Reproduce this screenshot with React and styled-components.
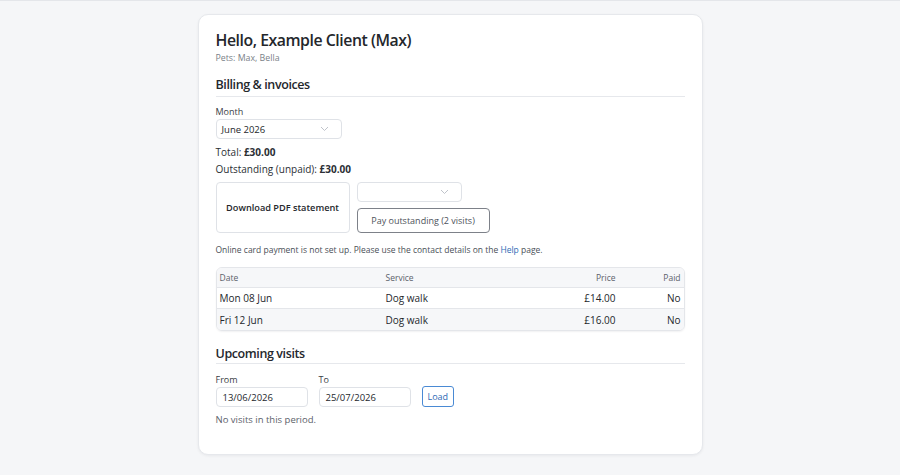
import React from "react";
import styled, { createGlobalStyle } from "styled-components";

const GlobalStyle = createGlobalStyle`
  html, body {
    margin: 0;
    padding: 0;
    background: #f5f6f8;
    font-family: "Open Sans", "Noto Sans", sans-serif;
    color: #1f2328;
  }
  * { box-sizing: border-box; }
`;

const visits = [
  { date: "Mon 08 Jun", service: "Dog walk", price: "£14.00", paid: "No" },
  { date: "Fri 12 Jun", service: "Dog walk", price: "£16.00", paid: "No" },
];

const Chevron = () => (
  <svg width="9" height="6" viewBox="0 0 9 6" fill="none">
    <path d="M1 1l3.5 3.5L8 1" stroke="#b8bcc4" strokeWidth="0.9" />
  </svg>
);

const App = () => {
  return (
    <>
      <GlobalStyle />
      <Page>
        <Card>
          <Title>Hello, Example Client (Max)</Title>
          <Muted>Pets: Max, Bella</Muted>

          <SectionTitle $top={12} $pad={2}>
            Billing &amp; invoices
          </SectionTitle>
          <Field $top={9}>
            <Label>Month</Label>
            <Select $width={126}>
              <span>June 2026</span>
              <Chevron />
            </Select>
          </Field>
          <Line $top={7}>
            Total: <b>£30.00</b>
          </Line>
          <Line $top={5}>
            Outstanding (unpaid): <b>£30.00</b>
          </Line>

          <Actions>
            <BigButton>Download PDF statement</BigButton>
            <PayColumn>
              <Select $width={105}>
                <span />
                <Chevron />
              </Select>
              <OutlineButton>Pay outstanding (2 visits)</OutlineButton>
            </PayColumn>
          </Actions>

          <Note>
            Online card payment is not set up. Please use the contact details on
            the <Link>Help</Link> page.
          </Note>

          <Table>
            <HeadRow>
              <Cell>Date</Cell>
              <Cell>Service</Cell>
              <Cell $right>Price</Cell>
              <Cell $right>Paid</Cell>
            </HeadRow>
            {visits.map((v, i) => (
              <Row key={v.date} $striped={i % 2 === 1}>
                <Cell>{v.date}</Cell>
                <Cell>{v.service}</Cell>
                <Cell $right>{v.price}</Cell>
                <Cell $right>{v.paid}</Cell>
              </Row>
            ))}
          </Table>

          <SectionTitle $top={14} $pad={0}>
            Upcoming visits
          </SectionTitle>
          <RangeRow>
            <Field $top={10}>
              <Label>From</Label>
              <Input>13/06/2026</Input>
            </Field>
            <Field $top={10}>
              <Label>To</Label>
              <Input>25/07/2026</Input>
            </Field>
            <LoadButton>Load</LoadButton>
          </RangeRow>
          <Empty>No visits in this period.</Empty>
        </Card>
      </Page>
    </>
  );
};

export default App;

const Page = styled.div`
  min-height: 475px;
  border-top: 1px solid #e4e6ea;
  padding-top: 13px;
  display: flex;
  justify-content: center;
  align-items: flex-start;
`;

const Card = styled.div`
  width: 505px;
  background: #fff;
  border: 1px solid #e6e8ec;
  border-radius: 10px;
  box-shadow: 0 1px 3px rgba(20, 24, 40, 0.06);
  padding: 14px 17px 28px 17px;
  display: flex;
  flex-direction: column;
`;

const Title = styled.h1`
  margin: 0;
  font-size: 15.8px;
  letter-spacing: -0.45px;
  font-weight: 600;
  line-height: 22px;
  color: #24272c;
`;

const Muted = styled.div`
  margin-top: 1px;
  font-size: 8.8px;
  line-height: 12px;
  color: #7a7f88;
`;

const SectionTitle = styled.h2`
  margin: ${(p) => p.$top}px 0 0;
  font-size: 12.5px;
  letter-spacing: -0.4px;
  font-weight: 600;
  line-height: 18px;
  padding-bottom: ${(p) => p.$pad}px;
  border-bottom: 1px solid #e6e8ec;
  color: #24272c;
`;

const Field = styled.div`
  display: flex;
  flex-direction: column;
  margin-top: ${(p) => p.$top}px;
`;

const Label = styled.div`
  font-size: 9px;
  line-height: 12px;
  color: #3a3e45;
  margin-bottom: 1px;
`;

const Select = styled.div`
  width: ${(p) => p.$width}px;
  height: 20px;
  border: 1px solid #dfe2e7;
  border-radius: 4px;
  background: #fff;
  display: flex;
  align-items: center;
  justify-content: space-between;
  padding: 0 12px 0 5px;
  font-size: 9.5px;
  color: #24272c;
`;

const Line = styled.div`
  margin-top: ${(p) => p.$top}px;
  font-size: 10px;
  line-height: 12px;
  color: #2b2f35;
  b {
    font-weight: 700;
  }
`;

const Actions = styled.div`
  display: flex;
  gap: 7px;
  margin-top: 7px;
`;

const BigButton = styled.div`
  width: 134px;
  height: 51px;
  border: 1px solid #dfe2e7;
  border-radius: 4px;
  display: flex;
  align-items: center;
  justify-content: center;
  font-size: 9.2px;
  font-weight: 600;
  color: #24272c;
`;

const PayColumn = styled.div`
  display: flex;
  flex-direction: column;
  gap: 6px;
`;

const OutlineButton = styled.div`
  width: 133px;
  height: 25px;
  border: 1px solid #7d8189;
  border-radius: 4px;
  display: flex;
  align-items: center;
  justify-content: center;
  font-size: 9px;
  color: #4d525a;
`;

const Note = styled.div`
  margin-top: 11px;
  font-size: 8.5px;
  line-height: 12px;
  color: #4a4f57;
`;

const Link = styled.span`
  color: #2f6bb5;
`;

const Table = styled.div`
  margin-top: 11px;
  border: 1px solid #e4e6ea;
  border-radius: 6px;
  overflow: hidden;
  box-shadow: 0 1px 2px rgba(20, 24, 40, 0.06);
`;

const HeadRow = styled.div`
  display: grid;
  grid-template-columns: 166px 1fr 100px 65px;
  height: 20px;
  align-items: center;
  background: #f6f7f9;
  border-bottom: 1px solid #e4e6ea;
  font-size: 8.5px;
  color: #5c616a;
`;

const Row = styled(HeadRow)`
  height: 21px;
  background: ${(p) => (p.$striped ? "#f6f7f9" : "#fff")};
  font-size: 10px;
  color: #24272c;
  &:last-child {
    border-bottom: none;
  }
`;

const Cell = styled.div`
  padding: 0 3px;
  text-align: ${(p) => (p.$right ? "right" : "left")};
`;

const RangeRow = styled.div`
  display: flex;
  align-items: flex-end;
  gap: 11px;
`;

const Input = styled.div`
  width: 92px;
  height: 20px;
  border: 1px solid #dfe2e7;
  border-radius: 4px;
  display: flex;
  align-items: center;
  padding: 0 6px;
  font-size: 9.5px;
  color: #24272c;
`;

const LoadButton = styled.div`
  height: 21px;
  padding: 0 5px;
  border: 1px solid #4a8ad4;
  border-radius: 3px;
  display: flex;
  align-items: center;
  font-size: 9px;
  color: #2f6bb5;
`;

const Empty = styled.div`
  margin-top: 7px;
  font-size: 9.5px;
  line-height: 12px;
  color: #5c616a;
`;
